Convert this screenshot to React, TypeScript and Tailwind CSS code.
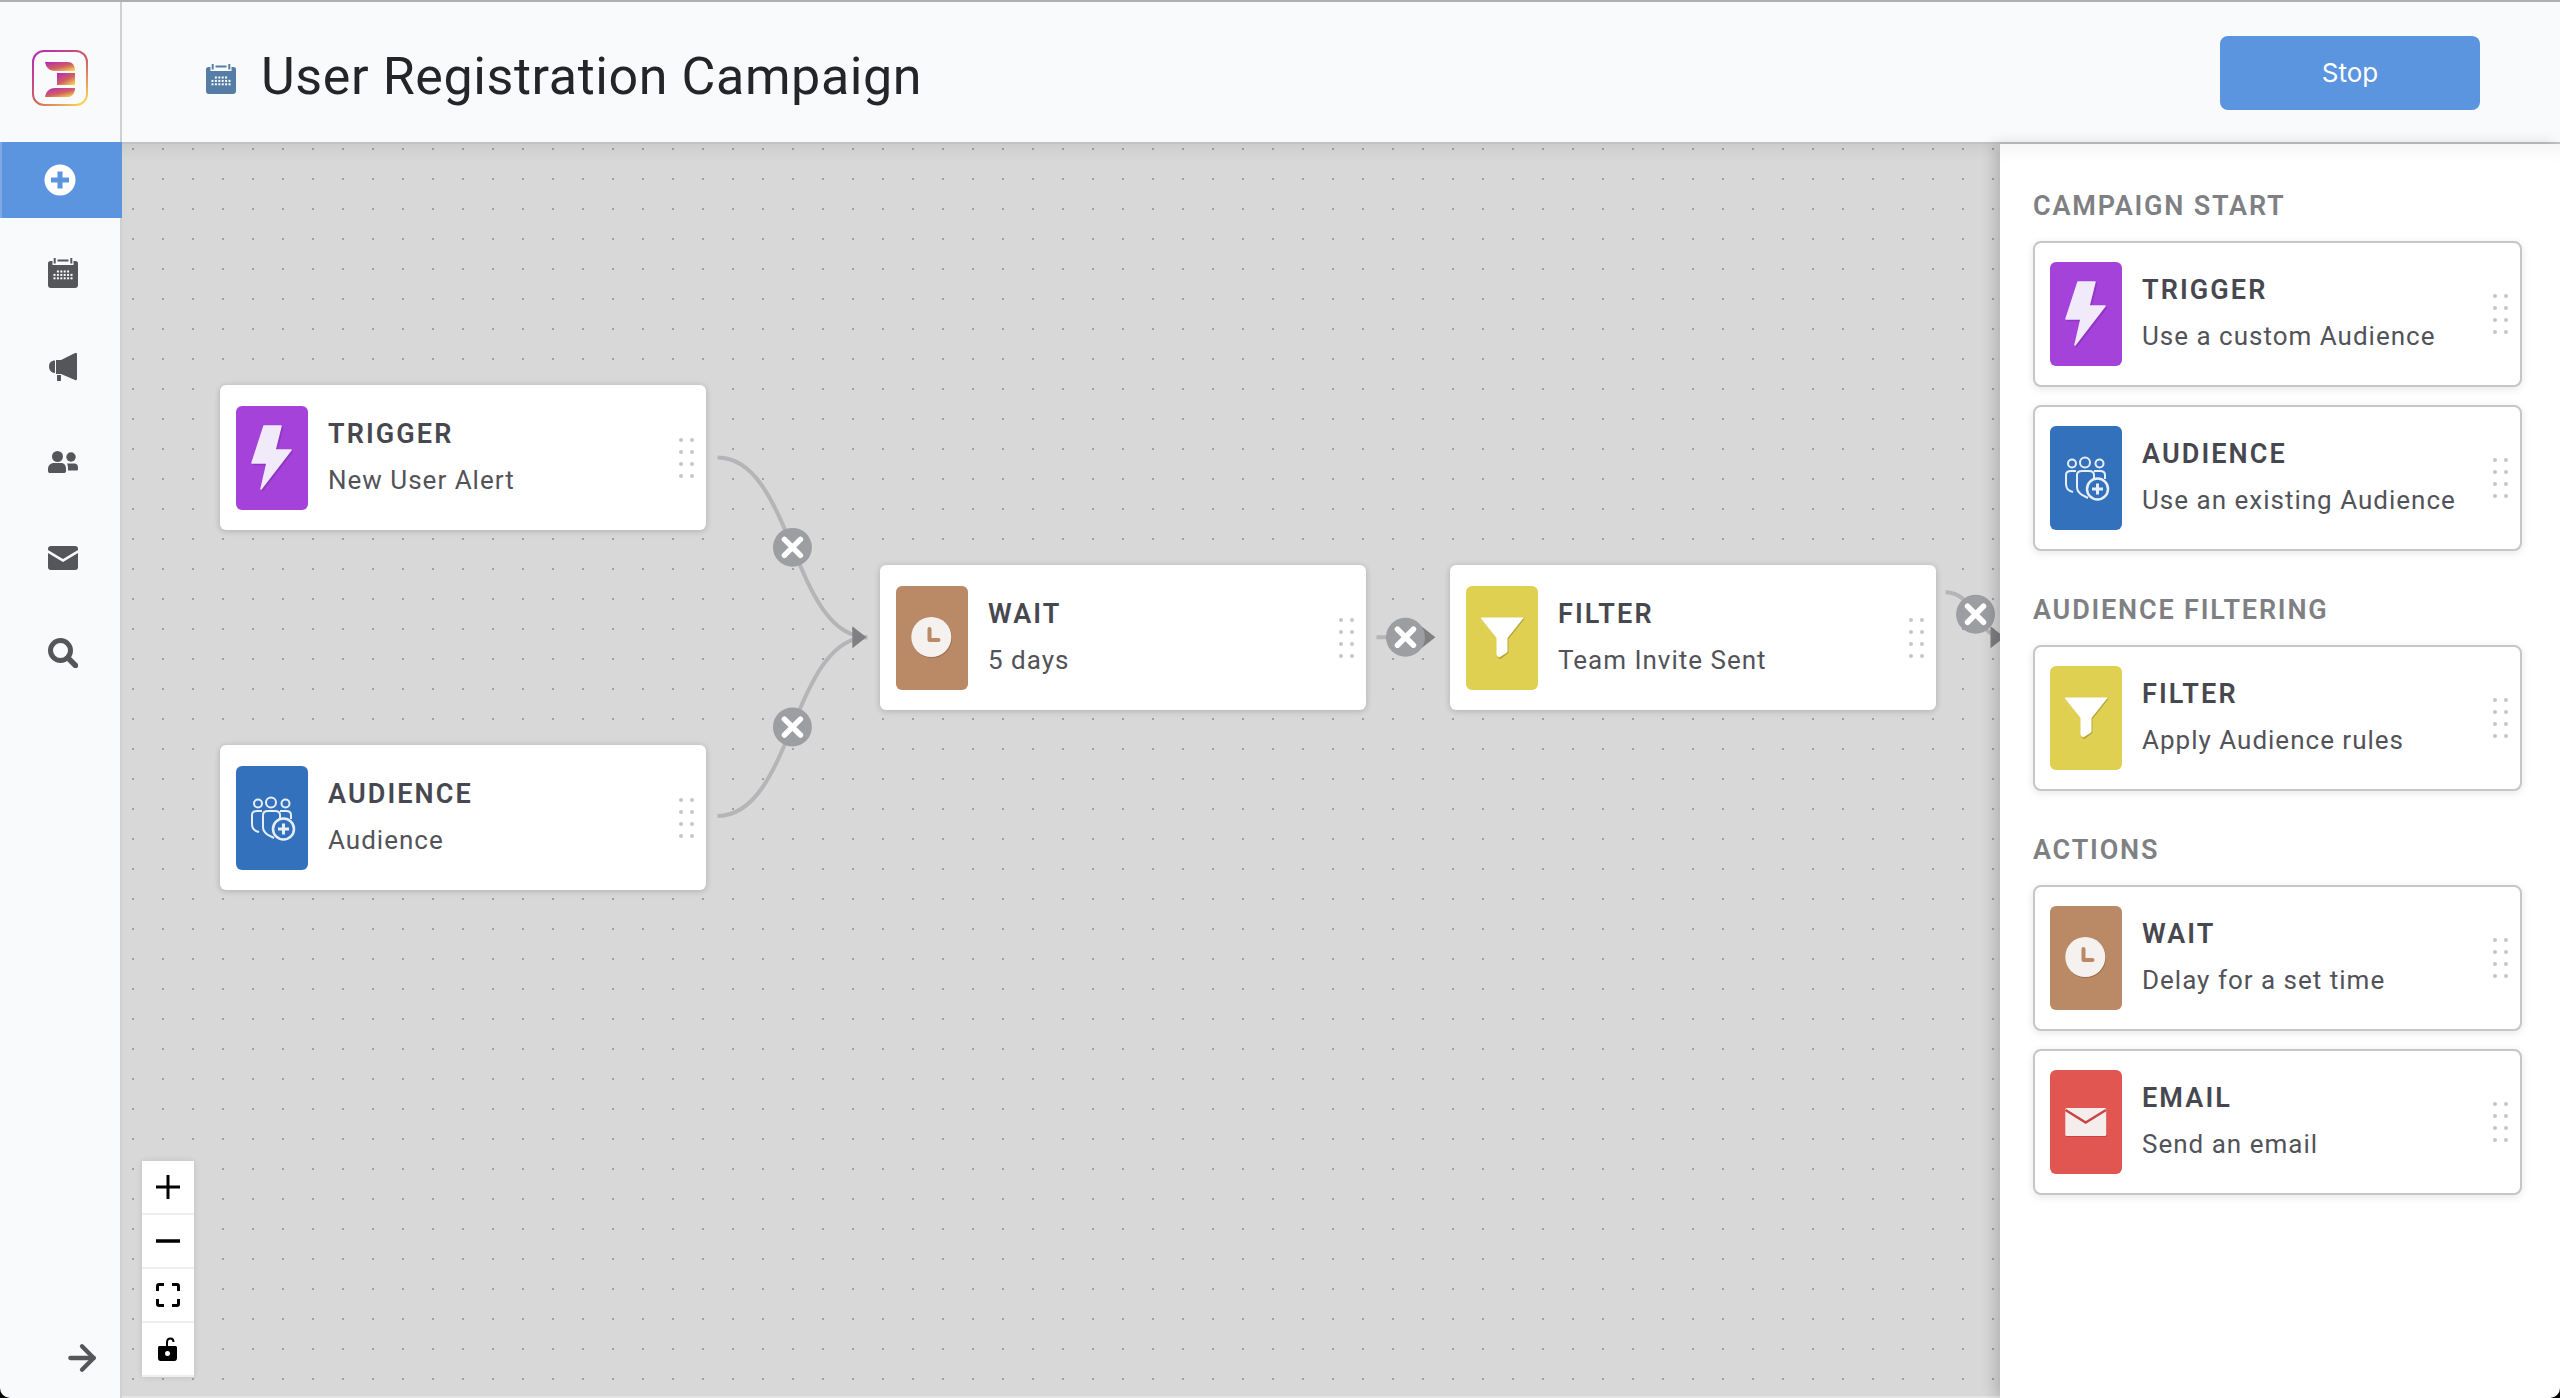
import React from 'react';
import { ArrowRight } from 'lucide-react';

type Kind = 'trigger' | 'audience' | 'filter' | 'wait' | 'email';

const boxColor: Record<Kind, string> = {
  trigger: 'bg-[#a542da]',
  audience: 'bg-[#3471bd]',
  filter: 'bg-[#dfd052]',
  wait: 'bg-[#b98a65]',
  email: 'bg-[#e25652]',
};

function KindIcon({ kind }: { kind: Kind }) {
  if (kind === 'trigger') {
    return (
      <svg viewBox="0 0 72 104" className="w-full h-full">
        <path d="M28 20H45L39 44H55L25 83L31 57H16Z" fill="#7c2ba8" opacity="0.5" transform="translate(1.5 1.5)" stroke="#7c2ba8" strokeWidth="1.5" strokeLinejoin="round" />
        <path d="M28 20H45L39 44H55L25 83L31 57H16Z" fill="#f1eafa" stroke="#f1eafa" strokeWidth="1.5" strokeLinejoin="round" />
      </svg>
    );
  }
  if (kind === 'audience') {
    return (
      <svg viewBox="0 0 72 104" className="w-full h-full" fill="none" stroke="#e6eef8" strokeWidth="2">
        <circle cx="22" cy="37.5" r="4" />
        <circle cx="35" cy="36.5" r="5" />
        <circle cx="49.5" cy="37.5" r="4" />
        <path d="M23 66C18 65 16 62 16 58V49C16 46 18 45 21 45H26" />
        <path d="M44 45H50C53 45 55 46 55 49V53" />
        <path d="M38 72L32 69C29 67 27 65 27 61V49C27 46 29 45 32 45H39C42 45 44 46 44 49V52" />
        <circle cx="47.5" cy="63" r="10.5" fill="#3471bd" strokeWidth="2.5" />
        <path d="M47.5 57.5V68.5M42 63H53" strokeWidth="3" />
      </svg>
    );
  }
  if (kind === 'filter') {
    return (
      <svg viewBox="0 0 72 104" className="w-full h-full">
        <path d="M15 32H57L41 52V66L33 72L31 70V52Z" fill="#b8a93a" transform="translate(1 1)" stroke="#b8a93a" strokeLinejoin="round" />
        <path d="M15 32H57L41 52V66L33 71L31 69V52Z" fill="#ffffff" stroke="#ffffff" strokeLinejoin="round" />
      </svg>
    );
  }
  if (kind === 'wait') {
    return (
      <svg viewBox="0 0 72 104" className="w-full h-full">
        <circle cx="36" cy="52" r="20" fill="#9c7150" />
        <circle cx="35.3" cy="51" r="20" fill="#f4f1ee" />
        <path d="M33.5 43V54H42.5" fill="none" stroke="#b98a65" strokeWidth="4" strokeLinejoin="round" strokeLinecap="round" />
      </svg>
    );
  }
  return (
    <svg viewBox="0 0 72 104" className="w-full h-full">
      <rect x="16" y="39" width="41" height="28" rx="1.5" fill="#c94340" />
      <rect x="15.3" y="38" width="41" height="28" rx="1.5" fill="#f5ecec" />
      <path d="M15.5 40L35.7 52.5L56 40" fill="none" stroke="#cb4444" strokeWidth="2.5" />
    </svg>
  );
}

function Grip() {
  return (
    <div className="ml-auto grid grid-cols-2 gap-x-[7px] gap-y-[8px] shrink-0">
      {Array.from({ length: 8 }).map((_, i) => (
        <span key={i} className="w-[4px] h-[4px] rounded-full bg-[#c6c6c8]" />
      ))}
    </div>
  );
}

function CardBody({ kind, title, text }: { kind: Kind; title: string; text: string }) {
  return (
    <>
      <div className={`w-[72px] h-[104px] rounded-[6px] shrink-0 ${boxColor[kind]}`}>
        <KindIcon kind={kind} />
      </div>
      <div className="ml-[20px] -mt-[2px] flex flex-col">
        <span className="text-[27px] leading-[46px] font-semibold tracking-[2.1px] text-[#47484f]">{title}</span>
        <span className="text-[26px] leading-[46px] tracking-[1px] text-[#525359] whitespace-nowrap">{text}</span>
      </div>
      <Grip />
    </>
  );
}

function Node({ kind, title, text, pos }: { kind: Kind; title: string; text: string; pos: string }) {
  return (
    <div className={`absolute w-[486px] h-[145px] flex items-center pl-[16px] pr-[12px] bg-white rounded-[6px] shadow-[0_1px_6px_rgba(0,0,0,0.2)] ${pos}`}>
      <CardBody kind={kind} title={title} text={text} />
    </div>
  );
}

function PaletteCard({ kind, title, text }: { kind: Kind; title: string; text: string }) {
  return (
    <div className="w-[489px] h-[146px] flex items-center pl-[15px] pr-[12px] bg-white rounded-[8px] border-2 border-[#c6c6c8] shadow-[0_2px_8px_rgba(0,0,0,0.1)]">
      <CardBody kind={kind} title={title} text={text} />
    </div>
  );
}

function Section({ title, children }: { title: string; children: React.ReactNode }) {
  return (
    <section className="flex flex-col">
      <h3 className="h-[32px] mb-[18px] text-[27px] leading-[30px] font-semibold tracking-[1.8px] text-[#7f8083]">{title}</h3>
      <div className="flex flex-col gap-[18px]">{children}</div>
    </section>
  );
}

function CalendarGlyph({ className }: { className: string }) {
  const dots: React.ReactNode[] = [];
  for (let row = 0; row < 3; row++) {
    for (let col = 0; col < 6; col++) {
      if (row === 0 && (col === 0 || col === 5)) continue;
      dots.push(<rect key={`${row}-${col}`} x={5.5 + col * 3.4} y={12.5 + row * 3.4} width="2" height="2" fill="#fff" />);
    }
  }
  return (
    <svg viewBox="0 0 30 30" className={className} fill="currentColor">
      <path d="M0 5.5Q0 3 2.5 3H4.5V7H25.5V3H27.5Q30 3 30 5.5V27Q30 30 27 30H3Q0 30 0 27Z" />
      <rect x="5.7" y="0" width="2" height="5.5" />
      <rect x="22.3" y="0" width="2" height="5.5" />
      <rect x="9.5" y="1.5" width="11" height="2" />
      {dots}
    </svg>
  );
}

function Sidebar() {
  return (
    <aside className="w-[122px] shrink-0 flex flex-col bg-[#f9fafc] border-r-2 border-[#d0d0d2] rounded-bl-[10px] relative">
      <div className="h-[140px] flex items-center justify-center pt-[12px]">
        <svg viewBox="0 0 56 56" className="w-[56px] h-[56px]">
          <defs>
            <linearGradient id="logoGrad" x1="0.1" y1="0" x2="0.9" y2="1">
              <stop offset="0" stopColor="#b82ab8" />
              <stop offset="0.55" stopColor="#d0625f" />
              <stop offset="1" stopColor="#f8d653" />
            </linearGradient>
          </defs>
          <rect x="1" y="1" width="54" height="54" rx="11" fill="none" stroke="url(#logoGrad)" strokeWidth="2" />
          <path d="M13 12H36C40 12 43 15 43 21H23C18 21 14 18 13 12Z" fill="url(#logoGrad)" />
          <path d="M25 23H43V35H25Z" fill="url(#logoGrad)" />
          <path d="M23 38H43C43 43 40 47 36 47H13C14 41 18 38 23 38Z" fill="url(#logoGrad)" />
        </svg>
      </div>
      <div className="h-[76px] -mr-[2px] flex items-center justify-center pr-[4px] bg-[#5b94df] border-l-2 border-[#7ea9e6]">
        <svg viewBox="0 0 32 32" className="w-[32px] h-[32px]">
          <circle cx="16" cy="16" r="15.5" fill="#fff" />
          <path d="M16 7.5V24.5M7 16H25" stroke="#5b94df" strokeWidth="5" />
        </svg>
      </div>
      <nav className="mt-[7px] flex flex-col pl-[48px] text-[#55565a]">
        <div className="h-[95px] flex items-center">
          <CalendarGlyph className="w-[30px] h-[30px]" />
        </div>
        <div className="h-[95px] flex items-center">
          <svg viewBox="0 0 30 28" className="w-[30px] h-[28px] -mt-[2px]" fill="currentColor">
            <path d="M8 7V21H13L27 27C28 27.5 29 27 29 26V1C29 0 28 -.5 27 0L13 7Z" />
            <path d="M7 7.5V20C3 20 1 17 1 13.5C1 10 3 7.5 7 7.5Z" />
            <path d="M9 22H13V27C13 28 12.5 28 12 28H10C9.5 28 9 28 9 27Z" />
          </svg>
        </div>
        <div className="h-[95px] flex items-center">
          <svg viewBox="0 0 30 22" className="w-[30px] h-[22px] -mt-[1px]" fill="currentColor">
            <circle cx="9.5" cy="5.5" r="5.5" />
            <path d="M0 18C0 14 3 12 6 12H13C16 12 18 14 18 18V20C18 21.5 17 22 16 22H2C1 22 0 21.5 0 20Z" />
            <circle cx="23" cy="6" r="4.7" />
            <path d="M19 12.5H26.5C28.5 12.5 30 14 30 16.5V18C30 19 29.5 19.5 28.5 19.5H20V17C20 15 19.5 13.5 19 12.5Z" />
          </svg>
        </div>
        <div className="h-[95px] flex items-center">
          <svg viewBox="0 0 30 24" className="w-[30px] h-[24px]" fill="currentColor">
            <path d="M0 4V3C0 1 1 0 3 0H27C29 0 30 1 30 3V4L15 13Z" />
            <path d="M0 7V21C0 23 1 24 3 24H27C29 24 30 23 30 21V7L15 16Z" />
          </svg>
        </div>
        <div className="h-[95px] flex items-center">
          <svg viewBox="0 0 30 30" className="w-[30px] h-[30px]" fill="none" stroke="currentColor">
            <circle cx="12.5" cy="12.5" r="10" strokeWidth="5" />
            <path d="M20 20L27.5 27.5" strokeWidth="5.5" strokeLinecap="round" />
          </svg>
        </div>
      </nav>
      <ArrowRight className="absolute left-[62px] bottom-[20px] w-[40px] h-[40px] text-[#55565a]" strokeWidth={2.6} />
    </aside>
  );
}

function CloseBubble({ cx, cy }: { cx: number; cy: number }) {
  return (
    <g>
      <circle cx={cx} cy={cy} r="19.5" fill="#9d9ea2" />
      <path d={`M${cx - 8} ${cy - 8}L${cx + 8} ${cy + 8}M${cx + 8} ${cy - 8}L${cx - 8} ${cy + 8}`} stroke="#fff" strokeWidth="5.5" strokeLinecap="round" />
    </g>
  );
}

function Edges() {
  return (
    <svg viewBox="122 144 1878 1254" className="absolute inset-0 w-full h-full">
      <g fill="none" stroke="#b5b5b7" strokeWidth="4">
        <path d="M717 458C792 458 792 638 867 638" />
        <path d="M717 817C792 817 792 638 867 638" />
        <path d="M1377 638H1430" />
        <path d="M1947 593C1977 593 1977 638 2005 638" />
      </g>
      <g fill="#808083">
        <path d="M852 627L866 638L852 649Z" />
        <path d="M1422 627L1436 638L1422 649Z" />
        <path d="M1992 627L2006 638L1992 649Z" />
      </g>
      <CloseBubble cx={792} cy={548} />
      <CloseBubble cx={792} cy={728} />
      <CloseBubble cx={1406} cy={638} />
      <CloseBubble cx={1977} cy={615} />
    </svg>
  );
}

function ZoomControls() {
  return (
    <div className="absolute left-[20px] bottom-[19px] w-[52px] flex flex-col bg-white shadow-[0_0_6px_rgba(0,0,0,0.12)] text-black">
      <button type="button" className="h-[54px] flex items-center justify-center border-b-2 border-[#eeeeee]">
        <svg viewBox="0 0 24 24" className="w-[24px] h-[24px]">
          <path d="M12 0V24M0 12H24" stroke="currentColor" strokeWidth="3" />
        </svg>
      </button>
      <button type="button" className="h-[54px] flex items-center justify-center border-b-2 border-[#eeeeee]">
        <svg viewBox="0 0 24 24" className="w-[24px] h-[24px]">
          <path d="M0 12H24" stroke="currentColor" strokeWidth="3.5" />
        </svg>
      </button>
      <button type="button" className="h-[54px] flex items-center justify-center border-b-2 border-[#eeeeee]">
        <svg viewBox="0 0 24 24" className="w-[24px] h-[24px]" fill="none" stroke="currentColor" strokeWidth="3">
          <path d="M8 1.5H3C2 1.5 1.5 2 1.5 3V8M16 1.5H21C22 1.5 22.5 2 22.5 3V8M8 22.5H3C2 22.5 1.5 22 1.5 21V16M16 22.5H21C22 22.5 22.5 22 22.5 21V16" />
        </svg>
      </button>
      <button type="button" className="h-[54px] flex items-center justify-center border-b-2 border-[#eeeeee]">
        <svg viewBox="0 0 20 24" className="w-[20px] h-[24px]">
          <path d="M9 9V5.5C9 3 10.5 1.5 12.5 1.5C14.5 1.5 15.5 3 15.5 5" fill="none" stroke="currentColor" strokeWidth="2" />
          <path fillRule="evenodd" d="M2 9H17C18.5 9 19 9.5 19 11V21C19 23 18 24 16.5 24H2.5C1 24 0 23 0 21V11C0 9.5 .5 9 2 9ZM9.5 14A2.5 2.5 0 1 0 9.5 19A2.5 2.5 0 1 0 9.5 14Z" fill="currentColor" />
        </svg>
      </button>
    </div>
  );
}

export default function App() {
  return (
    <div className="w-[2560px] h-[1398px] flex flex-col bg-black overflow-hidden font-['Roboto',sans-serif]">
      <div className="h-[2px] shrink-0 bg-[#b0b0b2]" />
      <div className="flex flex-1 min-h-0">
        <Sidebar />
        <div className="flex-1 min-w-0 flex flex-col">
          <header className="h-[142px] shrink-0 flex items-center pl-[84px] pr-[80px] bg-[#f9fafc] border-b-2 border-[#c2c2c4]">
            <CalendarGlyph className="w-[30px] h-[30px] mt-[14px] text-[#557da6] shrink-0" />
            <h1 className="ml-[25px] mt-[10px] text-[52px] leading-none font-normal tracking-[0.6px] text-[#242529] whitespace-nowrap">User Registration Campaign</h1>
            <button type="button" className="ml-auto mt-[1px] w-[260px] h-[74px] rounded-[8px] bg-[#5b94df] text-white text-[26px] font-['Inter',sans-serif]">Stop</button>
          </header>
          <div className="flex flex-1 min-h-0">
            <main className="relative flex-1 min-w-0 overflow-hidden bg-[#d8d8d8] bg-[radial-gradient(circle,#a0a0a2_1px,transparent_1px)] bg-size-[30px_30px] bg-position-[-4px_-10px] shadow-[inset_0_14px_16px_-10px_rgba(0,0,0,0.08)] border-b-2 border-[#e4e4e4]">
              <Edges />
              <Node kind="trigger" title="TRIGGER" text="New User Alert" pos="left-[98px] top-[241px]" />
              <Node kind="audience" title="AUDIENCE" text="Audience" pos="left-[98px] top-[601px]" />
              <Node kind="wait" title="WAIT" text="5 days" pos="left-[758px] top-[421px]" />
              <Node kind="filter" title="FILTER" text="Team Invite Sent" pos="left-[1328px] top-[421px]" />
              <ZoomControls />
            </main>
            <aside className="relative z-10 w-[560px] shrink-0 flex flex-col gap-[44px] pl-[33px] pt-[47px] bg-white rounded-br-[10px] shadow-[-6px_0_14px_rgba(0,0,0,0.16),inset_0_18px_18px_-14px_rgba(0,0,0,0.06)]">
              <Section title="CAMPAIGN START">
                <PaletteCard kind="trigger" title="TRIGGER" text="Use a custom Audience" />
                <PaletteCard kind="audience" title="AUDIENCE" text="Use an existing Audience" />
              </Section>
              <Section title="AUDIENCE FILTERING">
                <PaletteCard kind="filter" title="FILTER" text="Apply Audience rules" />
              </Section>
              <Section title="ACTIONS">
                <PaletteCard kind="wait" title="WAIT" text="Delay for a set time" />
                <PaletteCard kind="email" title="EMAIL" text="Send an email" />
              </Section>
            </aside>
          </div>
        </div>
      </div>
    </div>
  );
}
